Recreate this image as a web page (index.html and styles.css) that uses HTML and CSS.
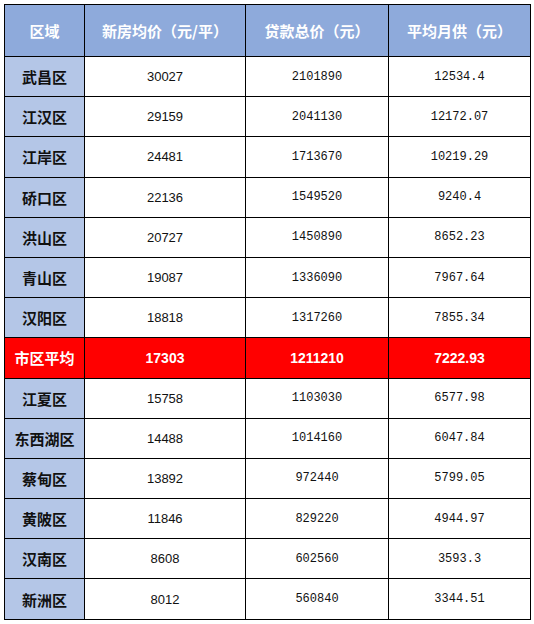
FILE: index.html
```
<!DOCTYPE html>
<html lang="zh">
<head>
<meta charset="utf-8">
<link rel="stylesheet" href="styles.css">
</head>
<body>
<table class="price-table">
  <colgroup>
    <col class="c1"><col class="c2"><col class="c3"><col class="c4">
  </colgroup>
  <thead>
    <tr>
      <th>区域</th>
      <th>新房均价（元/平）</th>
      <th>贷款总价（元）</th>
      <th>平均月供（元）</th>
    </tr>
  </thead>
  <tbody>
    <tr><td class="area">武昌区</td><td class="n1">30027</td><td class="n2">2101890</td><td class="n2">12534.4</td></tr>
    <tr><td class="area">江汉区</td><td class="n1">29159</td><td class="n2">2041130</td><td class="n2">12172.07</td></tr>
    <tr><td class="area">江岸区</td><td class="n1">24481</td><td class="n2">1713670</td><td class="n2">10219.29</td></tr>
    <tr><td class="area">硚口区</td><td class="n1">22136</td><td class="n2">1549520</td><td class="n2">9240.4</td></tr>
    <tr><td class="area">洪山区</td><td class="n1">20727</td><td class="n2">1450890</td><td class="n2">8652.23</td></tr>
    <tr><td class="area">青山区</td><td class="n1">19087</td><td class="n2">1336090</td><td class="n2">7967.64</td></tr>
    <tr><td class="area">汉阳区</td><td class="n1">18818</td><td class="n2">1317260</td><td class="n2">7855.34</td></tr>
    <tr class="avg"><td class="area">市区平均</td><td>17303</td><td>1211210</td><td>7222.93</td></tr>
    <tr><td class="area">江夏区</td><td class="n1">15758</td><td class="n2">1103030</td><td class="n2">6577.98</td></tr>
    <tr><td class="area">东西湖区</td><td class="n1">14488</td><td class="n2">1014160</td><td class="n2">6047.84</td></tr>
    <tr><td class="area">蔡甸区</td><td class="n1">13892</td><td class="n2">972440</td><td class="n2">5799.05</td></tr>
    <tr><td class="area">黄陂区</td><td class="n1">11846</td><td class="n2">829220</td><td class="n2">4944.97</td></tr>
    <tr><td class="area">汉南区</td><td class="n1">8608</td><td class="n2">602560</td><td class="n2">3593.3</td></tr>
    <tr><td class="area">新洲区</td><td class="n1">8012</td><td class="n2">560840</td><td class="n2">3344.51</td></tr>
  </tbody>
</table>
</body>
</html>
```
FILE: styles.css
```
html, body {
  margin: 0;
  padding: 0;
  background: #fff;
}
body {
  padding: 4px;
  font-family: "Liberation Sans", "Noto Sans CJK SC", sans-serif;
}
.price-table {
  border-collapse: collapse;
  table-layout: fixed;
  width: 526px;
}
.c1 { width: 80px; }
.c2 { width: 161px; }
.c3 { width: 143px; }
.c4 { width: 142px; }
.price-table th,
.price-table td {
  border: 1px solid #000;
  padding: 0;
  text-align: center;
  vertical-align: middle;
}
.price-table thead tr { height: 52px; }
.price-table tbody tr { height: 40.2px; }
.price-table th {
  background: #8eaadb;
  color: #fff;
  font-family: "Noto Sans CJK SC", sans-serif;
  font-weight: bold;
  font-size: 15px;
}
.area {
  background: #b4c6e7;
  color: #111;
  font-family: "Noto Sans CJK SC", sans-serif;
  font-weight: bold;
  font-size: 15px;
}
.n1 {
  font-family: "Liberation Sans", sans-serif;
  font-size: 13px;
  color: #111;
}
.n2 {
  font-family: "Liberation Mono", monospace;
  font-size: 12px;
  color: #111;
}
.avg td {
  background: #ff0000;
  color: #fff;
  font-weight: bold;
  font-family: "Liberation Sans", sans-serif;
  font-size: 14px;
}
.avg td.area {
  background: #ff0000;
  color: #fff;
  font-family: "Noto Sans CJK SC", sans-serif;
  font-size: 15px;
}
```
